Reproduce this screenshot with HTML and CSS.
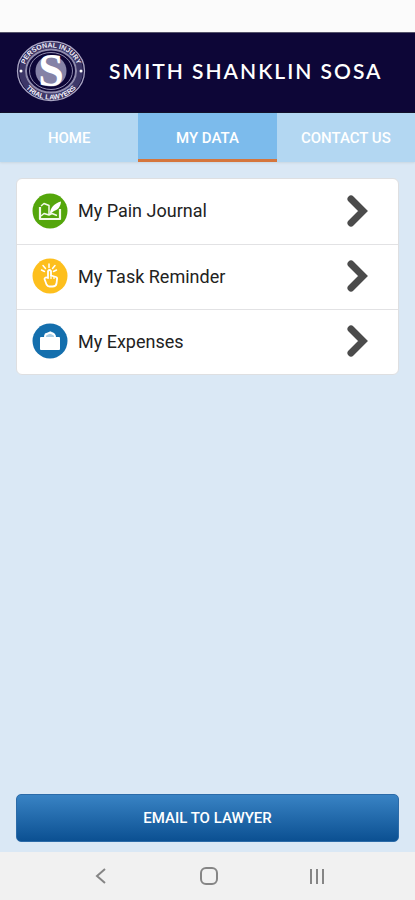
FILE: index.html
```html
<!DOCTYPE html>
<html lang="en">
<head>
    <meta charset="UTF-8">
    <meta name="viewport" content="width=device-width, initial-scale=1.0">
    <title>Smith Shanklin Sosa</title>
    <link rel="stylesheet" href="styles.css">
</head>
<body>

    <div class="status-bar"></div>

    <header class="header">
        <svg class="logo" viewBox="0 0 70 62" aria-hidden="true">
            <defs>
                <path id="arc-top" d="M8 31A27 23.500 0 0 1 62 31"/>
                <path id="arc-bottom" d="M3.500 31A31.500 28.500 0 0 0 66.500 31"/>
            </defs>
            <ellipse cx="35" cy="31" rx="33.500" ry="29.500" fill="none" stroke="#a9a5c3" stroke-width="1.300"/>
            <ellipse cx="35" cy="31" rx="29" ry="25.500" fill="none" stroke="#3d3768" stroke-width="6"/>
            <ellipse cx="35" cy="31" rx="25" ry="21.500" fill="none" stroke="#8f8bad" stroke-width="2"/>
            <ellipse cx="35" cy="31" rx="21.500" ry="18.500" fill="none" stroke="#8f8bad" stroke-width="1"/>
            <circle cx="35" cy="31" r="15.500" fill="#8582a6"/>
            <text class="logo-ring"><textPath href="#arc-top" startOffset="50%">PERSONAL INJURY</textPath></text>
            <text class="logo-ring"><textPath href="#arc-bottom" startOffset="50%">TRIAL LAWYERS</textPath></text>
            <circle cx="5" cy="31" r="1.500" fill="#fff"/>
            <circle cx="65" cy="31" r="1.500" fill="#fff"/>
            <text class="logo-letter" x="35" y="46">S</text>
        </svg>
        <h1 class="brand">SMITH SHANKLIN SOSA</h1>
    </header>

    <nav class="tabs">
        <a class="tab" href="#home">HOME</a>
        <a class="tab active" href="#my-data" aria-current="page">MY DATA</a>
        <a class="tab" href="#contact">CONTACT US</a>
    </nav>

    <main class="content">
        <div class="card">
            <a class="row" href="#journal">
                <svg class="row-icon" viewBox="0 0 36 36" aria-hidden="true">
                    <circle cx="18" cy="18" r="17.500" fill="#54a60b"/>
                    <path d="M8 14v12h20V16" fill="none" stroke="#f2fae9" stroke-width="2.200" stroke-linejoin="round"/>
                    <path d="M9 13l3-2.500 5 2v9.500l-5-1.500-3 2.500M17 22l3-1.500 5 2" fill="none" stroke="#f2fae9" stroke-width="1.500" stroke-linejoin="round"/>
                    <path d="M18 21c0-6 4-10.500 11-12.500-.300 4-2 8-7 9.500z" fill="#fff"/>
                </svg>
                <span class="row-label">My Pain Journal</span>
                <svg class="chevron" viewBox="0 0 24 34" aria-hidden="true"><path d="M5 5l12 12L5 29"/></svg>
            </a>
            <a class="row" href="#tasks">
                <svg class="row-icon" viewBox="0 0 36 36" aria-hidden="true">
                    <circle cx="18" cy="18" r="17.500" fill="#fdbf1d"/>
                    <path d="M17 9.500V6M13.500 10.500l-2.500-3M20.500 10.500l2.500-3M12.500 13.500L9.500 12M21.500 13.500l3-1.500" fill="none" stroke="#fff" stroke-width="1.500" stroke-linecap="round"/>
                    <path d="M16 20v-7q1.500-2 3 0v4.500l5 1.500q1.500.500 1 2.500l-.500 4q-.500 3-4 3h-3q-2 0-3-2l-2-5.500q.500-2.500 3.500-1z" fill="none" stroke="#fff" stroke-width="1.800" stroke-linejoin="round"/>
                    <path d="M19 17v4M22 18v3" stroke="#fff" stroke-width="1.200"/>
                </svg>
                <span class="row-label">My Task Reminder</span>
                <svg class="chevron" viewBox="0 0 24 34" aria-hidden="true"><path d="M5 5l12 12L5 29"/></svg>
            </a>
            <a class="row" href="#expenses">
                <svg class="row-icon" viewBox="0 0 36 36" aria-hidden="true">
                    <circle cx="18" cy="18" r="17.500" fill="#146fad"/>
                    <rect x="8" y="14" width="20" height="13" rx="1" fill="#fff"/>
                    <path d="M12 14l1-4 3 1 2-3 4 2 2 4z" fill="#a9cde4"/>
                    <path d="M13 14q0-3 3-3.500 2-1.500 4 0 3 .500 3 3.500" fill="none" stroke="#fff" stroke-width="1.800"/>
                </svg>
                <span class="row-label">My Expenses</span>
                <svg class="chevron" viewBox="0 0 24 34" aria-hidden="true"><path d="M5 5l12 12L5 29"/></svg>
            </a>
        </div>

        <button class="email-button" type="button">EMAIL TO LAWYER</button>
    </main>

    <footer class="system-nav">
        <button class="nav-key" type="button" aria-label="Back">
            <svg viewBox="0 0 20 20" aria-hidden="true"><path d="M14 3L6 10l8 7"/></svg>
        </button>
        <button class="nav-key" type="button" aria-label="Home">
            <svg viewBox="0 0 20 20" aria-hidden="true"><rect x="2" y="2" width="16" height="16" rx="5"/></svg>
        </button>
        <button class="nav-key" type="button" aria-label="Recent apps">
            <svg viewBox="0 0 20 20" aria-hidden="true"><path d="M4 3v15M10 3v15M16 3v15"/></svg>
        </button>
    </footer>

</body>
</html>
```

FILE: styles.css
```css
* { box-sizing: border-box; }

body {
    margin: 0;
    min-height: 100vh;
    display: flex;
    flex-direction: column;
    background: #dae8f5;
    font-family: Roboto, "Liberation Sans", sans-serif;
}

a { color: inherit; text-decoration: none; }

.status-bar { height: 32px; background: #fbfbfb; }

/* Header */
.header {
    display: flex;
    align-items: center;
    height: 81px;
    padding: 0 16px 4px;
    gap: 23px;
    background: #0d0637;
    border-top: 1px solid #55536a;
    border-bottom: 1px solid #05031c;
}
.logo { width: 70px; height: 62px; flex: none; }
.logo-ring {
    fill: #f0eef8;
    font: bold 7px "Liberation Sans", sans-serif;
    text-anchor: middle;
}
.logo-letter {
    fill: #fff;
    font: bold 46px "Liberation Serif", serif;
    text-anchor: middle;
}
.brand {
    margin: 0;
    color: #fff;
    font: 600 21px Lato, sans-serif;
    letter-spacing: 2px;
    white-space: nowrap;
}

/* Tabs */
.tabs {
    display: grid;
    grid-template-columns: repeat(3, 1fr);
    height: 49px;
    background: #b3d7f2;
    box-shadow: 0 1px 2px #c9d6e0;
}
.tab {
    display: flex;
    align-items: center;
    justify-content: center;
    border-bottom: 3px solid transparent;
    padding-top: 4px;
    color: #fff;
    font-size: 15px;
    font-weight: 500;
}
.tab.active { background: #7cbbec; border-bottom-color: #d5763d; }

/* Content */
.content {
    flex: 1;
    display: flex;
    flex-direction: column;
    justify-content: space-between;
    padding: 16px 16px 10px;
}
.card {
    background: #fff;
    border: 1px solid #dedfe1;
    border-radius: 6px;
}
.row {
    display: flex;
    align-items: center;
    height: 65px;
    padding: 0 28px 2px 15px;
    gap: 10px;
    color: #222;
}
.row + .row { border-top: 1px solid #e2e2e4; }
.row-icon { width: 36px; height: 36px; flex: none; }
.row-label { flex: 1; font-size: 18px; }
.chevron {
    width: 24px;
    height: 34px;
    fill: none;
    stroke: #4b4b4b;
    stroke-width: 7;
    stroke-linecap: round;
}

.email-button {
    height: 48px;
    border: 1px solid #2c6ba8;
    border-radius: 5px;
    background: linear-gradient(#3983c4, #0b5092);
    color: #fff;
    font-family: inherit;
    font-size: 15px;
    font-weight: 500;
}

/* System navigation */
.system-nav {
    display: flex;
    justify-content: center;
    gap: 88px;
    height: 48px;
    padding-left: 3px;
    background: #f1f1f1;
}
.nav-key {
    display: flex;
    align-items: center;
    padding: 0;
    border: 0;
    background: none;
}
.nav-key svg {
    width: 20px;
    height: 20px;
    fill: none;
    stroke: #858585;
    stroke-width: 2;
}
```
